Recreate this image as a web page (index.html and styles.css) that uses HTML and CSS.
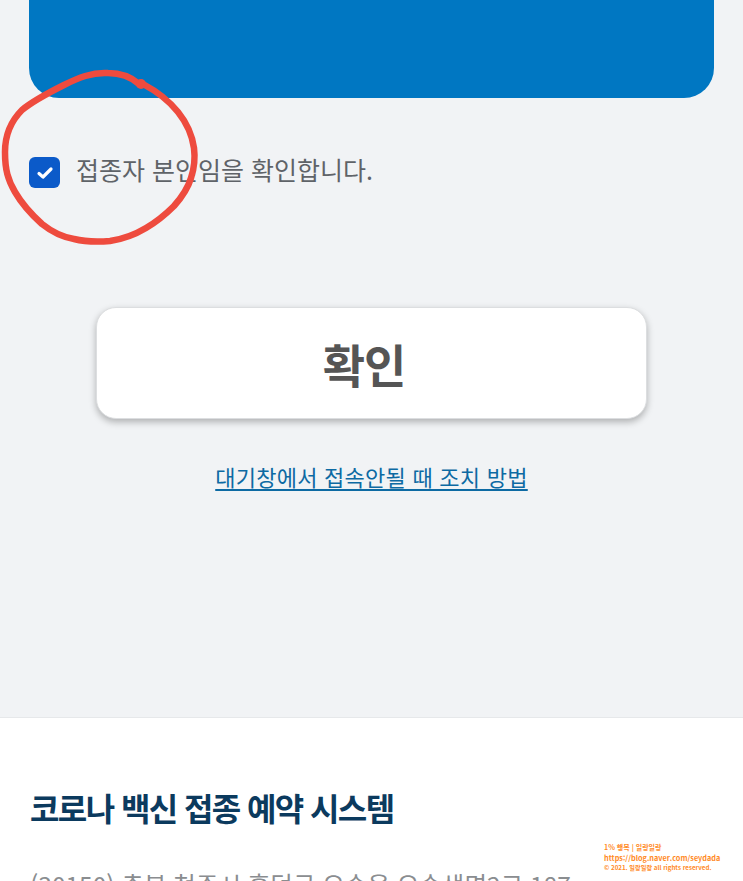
FILE: index.html
```html
<!DOCTYPE html>
<html lang="ko">
<head>
  <meta charset="UTF-8" />
  <meta name="viewport" content="width=device-width, initial-scale=1.0"/>
  <title>코로나 백신 접종 예약 시스템</title>
  <link rel="stylesheet" href="styles.css">
</head>
<body>
  <main>
    <div class="banner"></div>

    <label class="confirm-row">
      <span class="checkbox">
        <svg width="18" height="14" viewBox="0 0 18 14" aria-hidden="true">
          <path d="M3 7.5 L7 11 L15 3" fill="none" stroke="#fff" stroke-width="3.2" stroke-linecap="round" stroke-linejoin="round"/>
        </svg>
      </span>
      <span class="confirm-text">접종자 본인임을 확인합니다.</span>
    </label>

    <div class="actions">
      <button class="confirm-btn" type="button">확인</button>
      <a class="help-link" href="#">대기창에서 접속안될 때 조치 방법</a>
    </div>
  </main>

  <footer>
    <h2>코로나 백신 접종 예약 시스템</h2>
    <p>(30150) 충북 청주시 흥덕구 오송읍 오송생명2로 187</p>
  </footer>

  <!-- red pen circle drawn over the screenshot -->
  <svg class="pen-circle" width="210" height="190" viewBox="0 60 210 190" aria-hidden="true">
    <path d="M139 84 C130 76 120 73 108 73 C92 72 78 78 64 85 C50 92 34 100 22 110 C10 122 5 136 5 152 C5 170 8 180 15 192 C22 204 32 215 42 224 C52 232 62 237 74 239 C86 242 98 242 110 241 C124 239 136 234 146 228 C158 221 166 214 174 206 C182 197 188 188 191 178 C195 166 195 156 194 148 C192 134 186 122 178 112 C170 102 158 92 143 84" fill="none" stroke="#ee4b3e" stroke-width="6.5" stroke-linecap="round" stroke-linejoin="round"/>
    <circle cx="141" cy="84" r="5" fill="#ee4b3e"/>
  </svg>

  <div class="watermark">
    <div>1% 행복 | 일랑일랑</div>
    <div class="watermark-url">https://blog.naver.com/seydada</div>
    <div class="watermark-copy">© 2021. 일랑일랑 all rights reserved.</div>
  </div>
</body>
</html>
```

FILE: styles.css
```css
* {
  box-sizing: border-box;
}

html, body {
  margin: 0;
  height: 881px;
  overflow: hidden;
}

body {
  position: relative;
  display: flex;
  flex-direction: column;
  background: #f1f3f5;
  font-family: "Noto Sans CJK KR", "Noto Sans", sans-serif;
}

main {
  flex: none;
  height: 717px;
  padding: 0 29px;
}

.banner {
  height: 98px;
  background: #0077c2;
  border-radius: 0 0 30px 30px;
}

.confirm-row {
  display: flex;
  align-items: center;
  gap: 16px;
  margin-top: 59px;
  height: 31px;
}

.checkbox {
  display: flex;
  align-items: center;
  justify-content: center;
  width: 31px;
  height: 31px;
  background: #0b5ac9;
  border-radius: 6px;
}

.confirm-text {
  padding-bottom: 8px;
  font-size: 25px;
  color: #5f6368;
}

.actions {
  display: flex;
  flex-direction: column;
  align-items: center;
  margin-top: 119px;
}

.confirm-btn {
  width: 551px;
  height: 112px;
  padding: 0 15px 0 0;
  background: #fff;
  border: 1px solid #dcdee0;
  border-radius: 20px;
  box-shadow: 0 3px 7px rgba(0, 0, 0, 0.28);
  font-family: inherit;
  font-size: 46px;
  font-weight: 700;
  color: #555;
  letter-spacing: -1px;
}

.help-link {
  margin-top: 39px;
  font-size: 22px;
  line-height: 36px;
  letter-spacing: 0.25px;
  color: #0d6aa3;
  text-decoration: underline;
  text-underline-offset: 3px;
}

footer {
  flex: none;
  height: 164px;
  padding: 64px 30px 0;
  background: #fff;
  border-top: 1px solid #e6e8ea;
}

footer h2 {
  margin: 0;
  font-size: 32px;
  line-height: 50px;
  font-weight: 700;
  color: #0b3a5e;
  letter-spacing: -1.6px;
}

footer p {
  margin: 35px 0 0;
  font-size: 24.5px;
  line-height: 36px;
  color: #8a8d90;
  white-space: nowrap;
}

.pen-circle {
  position: absolute;
  left: 0;
  top: 60px;
}

.watermark {
  position: absolute;
  left: 604px;
  top: 842px;
  font-size: 7px;
  line-height: 10.5px;
  font-weight: 700;
  color: #ff8a1f;
  white-space: nowrap;
}

.watermark-url {
  font-size: 7.3px;
}

.watermark-copy {
  font-size: 6.2px;
}
```
